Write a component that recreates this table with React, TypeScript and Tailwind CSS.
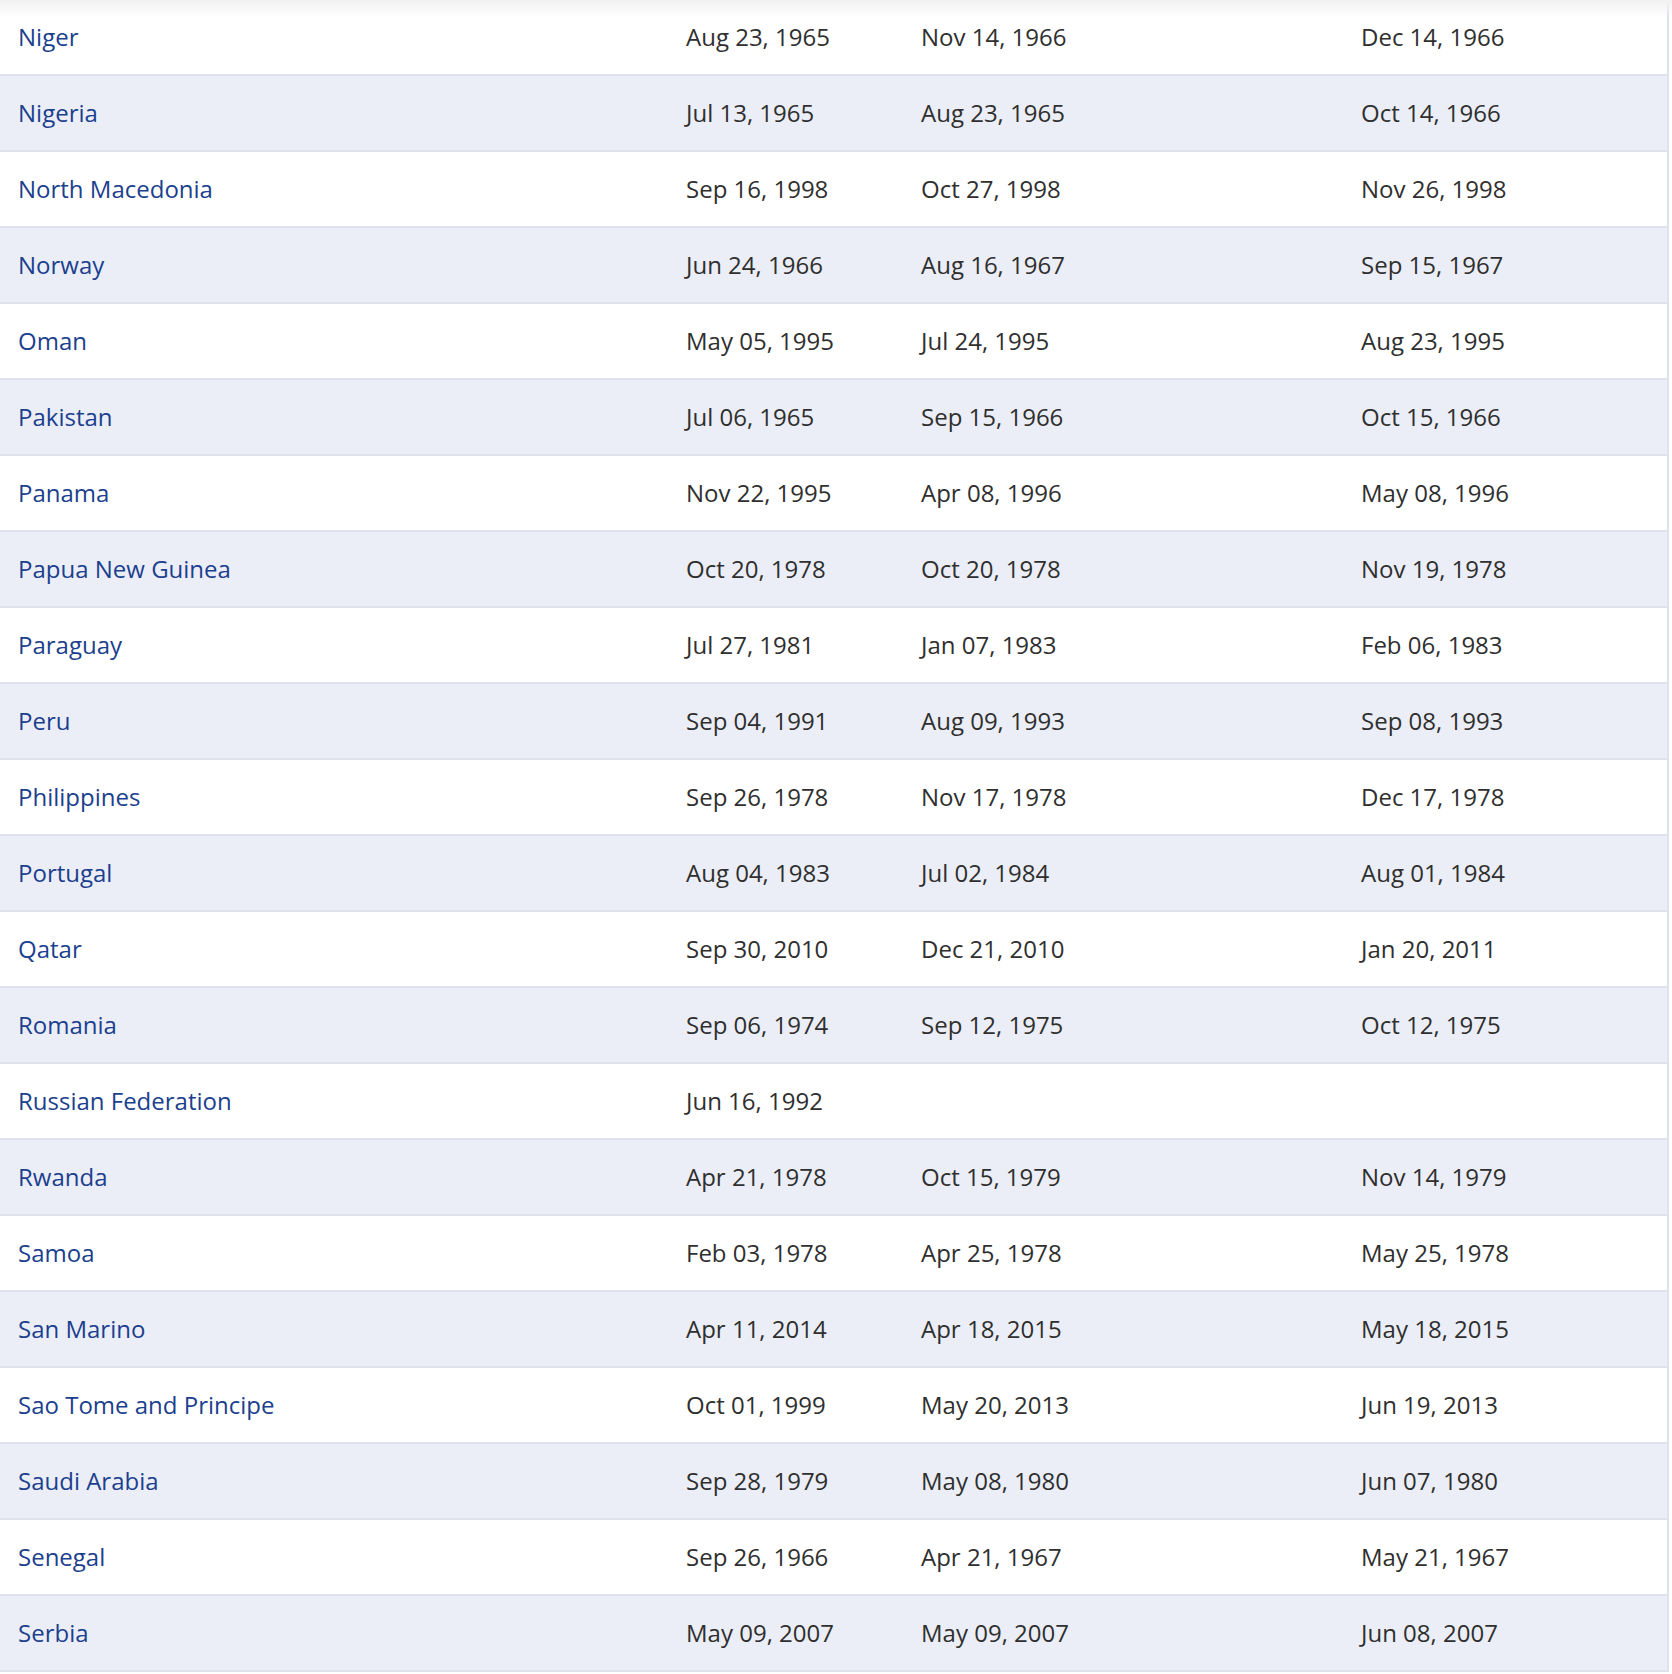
import React from "react";

const rows: [string, string, string, string][] = [
  ["Niger", "Aug 23, 1965", "Nov 14, 1966", "Dec 14, 1966"],
  ["Nigeria", "Jul 13, 1965", "Aug 23, 1965", "Oct 14, 1966"],
  ["North Macedonia", "Sep 16, 1998", "Oct 27, 1998", "Nov 26, 1998"],
  ["Norway", "Jun 24, 1966", "Aug 16, 1967", "Sep 15, 1967"],
  ["Oman", "May 05, 1995", "Jul 24, 1995", "Aug 23, 1995"],
  ["Pakistan", "Jul 06, 1965", "Sep 15, 1966", "Oct 15, 1966"],
  ["Panama", "Nov 22, 1995", "Apr 08, 1996", "May 08, 1996"],
  ["Papua New Guinea", "Oct 20, 1978", "Oct 20, 1978", "Nov 19, 1978"],
  ["Paraguay", "Jul 27, 1981", "Jan 07, 1983", "Feb 06, 1983"],
  ["Peru", "Sep 04, 1991", "Aug 09, 1993", "Sep 08, 1993"],
  ["Philippines", "Sep 26, 1978", "Nov 17, 1978", "Dec 17, 1978"],
  ["Portugal", "Aug 04, 1983", "Jul 02, 1984", "Aug 01, 1984"],
  ["Qatar", "Sep 30, 2010", "Dec 21, 2010", "Jan 20, 2011"],
  ["Romania", "Sep 06, 1974", "Sep 12, 1975", "Oct 12, 1975"],
  ["Russian Federation", "Jun 16, 1992", "", ""],
  ["Rwanda", "Apr 21, 1978", "Oct 15, 1979", "Nov 14, 1979"],
  ["Samoa", "Feb 03, 1978", "Apr 25, 1978", "May 25, 1978"],
  ["San Marino", "Apr 11, 2014", "Apr 18, 2015", "May 18, 2015"],
  ["Sao Tome and Principe", "Oct 01, 1999", "May 20, 2013", "Jun 19, 2013"],
  ["Saudi Arabia", "Sep 28, 1979", "May 08, 1980", "Jun 07, 1980"],
  ["Senegal", "Sep 26, 1966", "Apr 21, 1967", "May 21, 1967"],
  ["Serbia", "May 09, 2007", "May 09, 2007", "Jun 08, 2007"],
];

export default function App() {
  return (
    <div
      className="relative w-[1672px] bg-white pr-[3px]"
      style={{ fontFamily: '"Open Sans", "Noto Sans", sans-serif' }}
    >
      <div className="pointer-events-none absolute left-0 right-0 top-0 h-[18px] bg-gradient-to-b from-[#f1f1f1] to-white/0" />
      <div className="border-r-2 border-[#dfe2ec]">
        {rows.map((r, i) => (
          <div
            key={r[0]}
            className={`grid h-[76px] grid-cols-[668px_235px_440px_1fr] items-center border-b-2 border-[#dfe2ec] text-[24px] ${
              i % 2 === 1 ? "bg-[#ebeef6]" : "bg-transparent"
            }`}
          >
            <div className="pl-[18px] text-[#1c3f8e]">{r[0]}</div>
            <div className="pl-[18px] text-[#2f2f2f]">{r[1]}</div>
            <div className="pl-[18px] text-[#2f2f2f]">{r[2]}</div>
            <div className="pl-[18px] text-[#2f2f2f]">{r[3]}</div>
          </div>
        ))}
      </div>
    </div>
  );
}
